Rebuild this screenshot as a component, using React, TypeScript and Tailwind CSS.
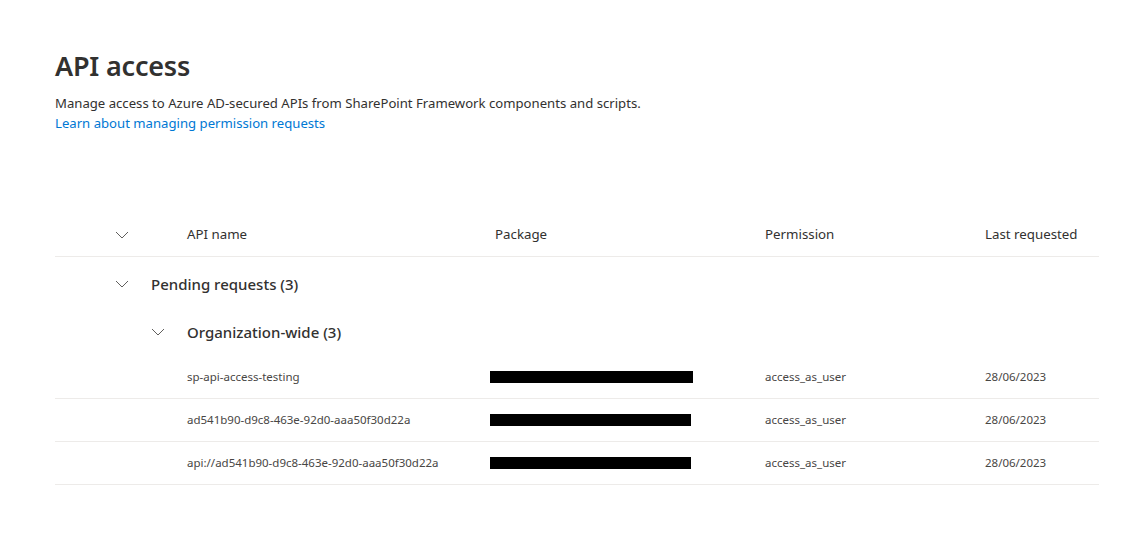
import React from 'react';

const Chevron = ({ className = '' }: { className?: string }) => (
  <svg width="14" height="8" viewBox="0 0 14 8" className={className} fill="none">
    <polyline points="1,1 7,7 13,1" stroke="#605e5c" strokeWidth="1" />
  </svg>
);

const rows = [
  { name: 'sp-api-access-testing', bar: 'w-[203px]' },
  { name: 'ad541b90-d9c8-463e-92d0-aaa50f30d22a', bar: 'w-[201px]' },
  { name: 'api://ad541b90-d9c8-463e-92d0-aaa50f30d22a', bar: 'w-[201px]' },
];

const cols = 'grid grid-cols-[132px_308px_270px_220px_1fr]';

export default function App() {
  return (
    <main
      className="min-h-[539px] w-[1145px] bg-white pl-[55px] pr-[46px] pt-[48px] text-[#323130]"
      style={{ fontFamily: '"Noto Sans", "Open Sans", sans-serif' }}
    >
      <h1 className="text-[27px] font-semibold leading-[36px] tracking-[-0.2px]">API access</h1>
      <p className="mt-[9px] text-[13.15px] leading-[20px]">
        Manage access to Azure AD-secured APIs from SharePoint Framework components and scripts.
      </p>
      <a href="#" className="block text-[13.15px] leading-[20px] text-[#0078d4]">
        Learn about managing permission requests
      </a>

      <section className="mt-[81px]">
        <div className={`${cols} h-[43px] items-center border-b border-[#edebe9] text-[13.3px]`}>
          <div className="flex justify-end pr-[58px]">
            <Chevron />
          </div>
          <div>API name</div>
          <div>Package</div>
          <div>Permission</div>
          <div>Last requested</div>
        </div>

        <div className="flex h-[54px] items-center">
          <div className="flex w-[96px] justify-end pr-[22px]">
            <Chevron />
          </div>
          <span className="text-[15px] font-medium">Pending requests (3)</span>
        </div>

        <div className="flex h-[45px] items-center pb-[3px]">
          <div className="flex w-[132px] justify-end pr-[22px]">
            <Chevron />
          </div>
          <span className="text-[15px] font-medium">Organization-wide (3)</span>
        </div>

        {rows.map((r) => (
          <div
            key={r.name}
            className={`${cols} h-[43px] items-center border-b border-[#edebe9] text-[11.5px] text-[#484644]`}
          >
            <div />
            <div>{r.name}</div>
            <div>
              <div className={`ml-[-5px] h-[12px] bg-black ${r.bar}`} />
            </div>
            <div>access_as_user</div>
            <div>28/06/2023</div>
          </div>
        ))}
      </section>
    </main>
  );
}
